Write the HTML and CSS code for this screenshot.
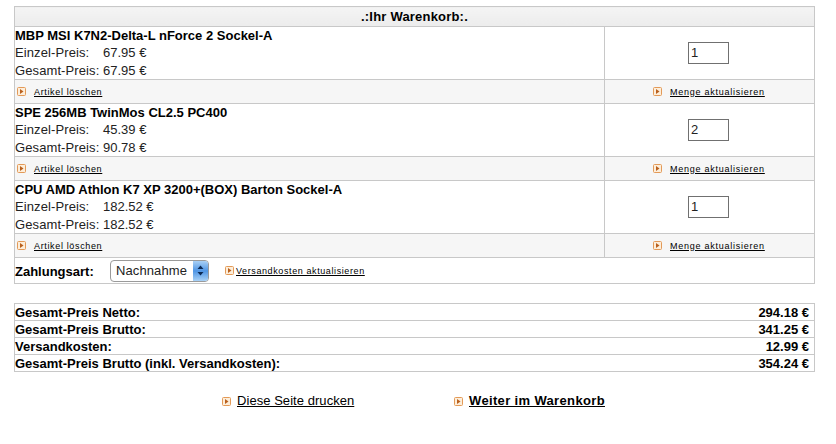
FILE: index.html
```html
<!DOCTYPE html>
<html lang="de">
  <head>
    <meta charset="UTF-8" />
    <title>Warenkorb</title>
    <link rel="stylesheet" href="styles.css">
  </head>
  <body>
    <svg class="defs" width="0" height="0">
      <symbol id="arrow" viewBox="0 0 9 9">
        <rect x="0.5" y="0.5" width="8" height="8" rx="1" fill="#fdeeda" stroke="#e39a58" />
        <path d="M3 2 L6.5 4.5 L3 7 Z" fill="#b9601e" />
      </symbol>
    </svg>

    <table class="cart">
      <tr><th class="cart-title" colspan="2">.:Ihr Warenkorb:.</th></tr>

      <tr class="item">
        <td class="item-info">
          <div class="item-name">MBP MSI K7N2-Delta-L nForce 2 Sockel-A</div>
          <div class="price-line"><span class="price-label">Einzel-Preis:</span>67.95 €</div>
          <div class="price-line"><span class="price-label">Gesamt-Preis:</span>67.95 €</div>
        </td>
        <td class="item-qty"><input class="qty" type="text" value="1"></td>
      </tr>
      <tr class="actions">
        <td><svg class="ico"><use href="#arrow" /></svg><a href="#">Artikel löschen</a></td>
        <td class="action-right"><svg class="ico"><use href="#arrow" /></svg><a href="#">Menge aktualisieren</a></td>
      </tr>

      <tr class="item">
        <td class="item-info">
          <div class="item-name">SPE 256MB TwinMos CL2.5 PC400</div>
          <div class="price-line"><span class="price-label">Einzel-Preis:</span>45.39 €</div>
          <div class="price-line"><span class="price-label">Gesamt-Preis:</span>90.78 €</div>
        </td>
        <td class="item-qty"><input class="qty" type="text" value="2"></td>
      </tr>
      <tr class="actions">
        <td><svg class="ico"><use href="#arrow" /></svg><a href="#">Artikel löschen</a></td>
        <td class="action-right"><svg class="ico"><use href="#arrow" /></svg><a href="#">Menge aktualisieren</a></td>
      </tr>

      <tr class="item">
        <td class="item-info">
          <div class="item-name">CPU AMD Athlon K7 XP 3200+(BOX) Barton Sockel-A</div>
          <div class="price-line"><span class="price-label">Einzel-Preis:</span>182.52 €</div>
          <div class="price-line"><span class="price-label">Gesamt-Preis:</span>182.52 €</div>
        </td>
        <td class="item-qty"><input class="qty" type="text" value="1"></td>
      </tr>
      <tr class="actions">
        <td><svg class="ico"><use href="#arrow" /></svg><a href="#">Artikel löschen</a></td>
        <td class="action-right"><svg class="ico"><use href="#arrow" /></svg><a href="#">Menge aktualisieren</a></td>
      </tr>

      <tr class="payment">
        <td colspan="2">
          <div class="payment-row">
            <b class="payment-label">Zahlungsart:</b>
            <div class="select-box">
              <span>Nachnahme</span>
              <span class="select-arrows">
                <svg width="7" height="11" viewBox="0 0 7 11"><path d="M3.5 0.5 L6.5 4 H0.5 Z M3.5 10.5 L6.5 7 H0.5 Z" fill="#0c2a55" /></svg>
              </span>
            </div>
            <svg class="ico ico-tight"><use href="#arrow" /></svg><a class="shipping-link" href="#">Versandkosten aktualisieren</a>
          </div>
        </td>
      </tr>
    </table>

    <table class="totals">
      <tr><td>Gesamt-Preis Netto:</td><td class="amount">294.18 €</td></tr>
      <tr><td>Gesamt-Preis Brutto:</td><td class="amount">341.25 €</td></tr>
      <tr><td>Versandkosten:</td><td class="amount">12.99 €</td></tr>
      <tr><td>Gesamt-Preis Brutto (inkl. Versandkosten):</td><td class="amount">354.24 €</td></tr>
    </table>

    <div class="bottom-links">
      <div class="bottom-link"><svg class="ico"><use href="#arrow" /></svg><a href="#">Diese Seite drucken</a></div>
      <div class="bottom-link strong"><svg class="ico"><use href="#arrow" /></svg><a href="#">Weiter im Warenkorb</a></div>
    </div>
  </body>
</html>
```

FILE: styles.css
```css
* {
  box-sizing: border-box;
}

body {
  margin: 6px 0 0 14px;
  width: 801px;
  font-family: "Liberation Sans", Arial, sans-serif;
  font-size: 13px;
  color: #000;
  background: #fff;
}

a {
  color: #000;
}

.defs {
  position: absolute;
}

.ico {
  width: 9px;
  height: 9px;
  flex: none;
  margin-right: 8px;
  vertical-align: -1px;
}

.ico-tight {
  margin: 0 2px 0 0;
}

table {
  width: 100%;
  border-collapse: collapse;
}

td,
th {
  border: 1px solid #c8c8c8;
  padding: 0;
}

.cart-title {
  height: 20px;
  font-size: 13px;
  letter-spacing: 0.2px;
  text-align: center;
  background: linear-gradient(#f4f4f4, #ececec);
}

.item {
  height: 53px;
}

.item-info {
  width: 590px;
  vertical-align: top;
}

.item-name {
  font-weight: 700;
  line-height: 17px;
}

.price-line {
  line-height: 17px;
  color: #222;
}

.price-line + .price-line {
  margin-top: 1px;
}

.price-label {
  display: inline-block;
  width: 88px;
  letter-spacing: 0.1px;
}

.item-qty {
  padding-right: 2px;
  text-align: center;
}

.qty {
  width: 41px;
  height: 22px;
  margin-bottom: 1px;
  border: 1px solid #707070;
  padding: 0 0 0 2px;
  font-family: "Liberation Sans", Arial, sans-serif;
  font-size: 13px;
  color: #222;
  vertical-align: middle;
}

.actions {
  height: 24px;
  background: #f6f6f6;
}

.actions td {
  padding-left: 2px;
  font-size: 9px;
  letter-spacing: 0.65px;
  vertical-align: middle;
}

.actions .action-right {
  padding-left: 48px;
  letter-spacing: 0.75px;
}

.payment {
  height: 26px;
}

.payment-row {
  display: flex;
  align-items: center;
}

.payment-label {
  width: 95px;
  margin-top: 2px;
}

.select-box {
  display: flex;
  justify-content: space-between;
  align-items: center;
  width: 99px;
  height: 22px;
  margin-right: 16px;
  padding-left: 5px;
  border: 1px solid #9a9a9a;
  border-radius: 4px;
  letter-spacing: 0.1px;
  color: #222;
  overflow: hidden;
}

.select-arrows {
  display: flex;
  justify-content: center;
  align-items: center;
  width: 15px;
  height: 100%;
  background: linear-gradient(#a9d0f5, #4f95e4 50%, #a9d2f7);
}

.shipping-link {
  font-size: 9px;
  letter-spacing: 0.6px;
}

.totals {
  margin-top: 19px;
}

.totals td {
  height: 17px;
  padding: 0 5px 0 0;
  font-weight: 700;
}

.totals .amount {
  border-left: none;
  text-align: right;
}

.totals td:first-child {
  border-right: none;
}

.bottom-links {
  display: flex;
  margin-top: 21px;
  padding-left: 208px;
}

.bottom-link {
  width: 232px;
  letter-spacing: 0.05px;
}

.bottom-link .ico {
  margin-right: 6px;
}

.bottom-link.strong {
  font-weight: 700;
  letter-spacing: 0.35px;
}
```
